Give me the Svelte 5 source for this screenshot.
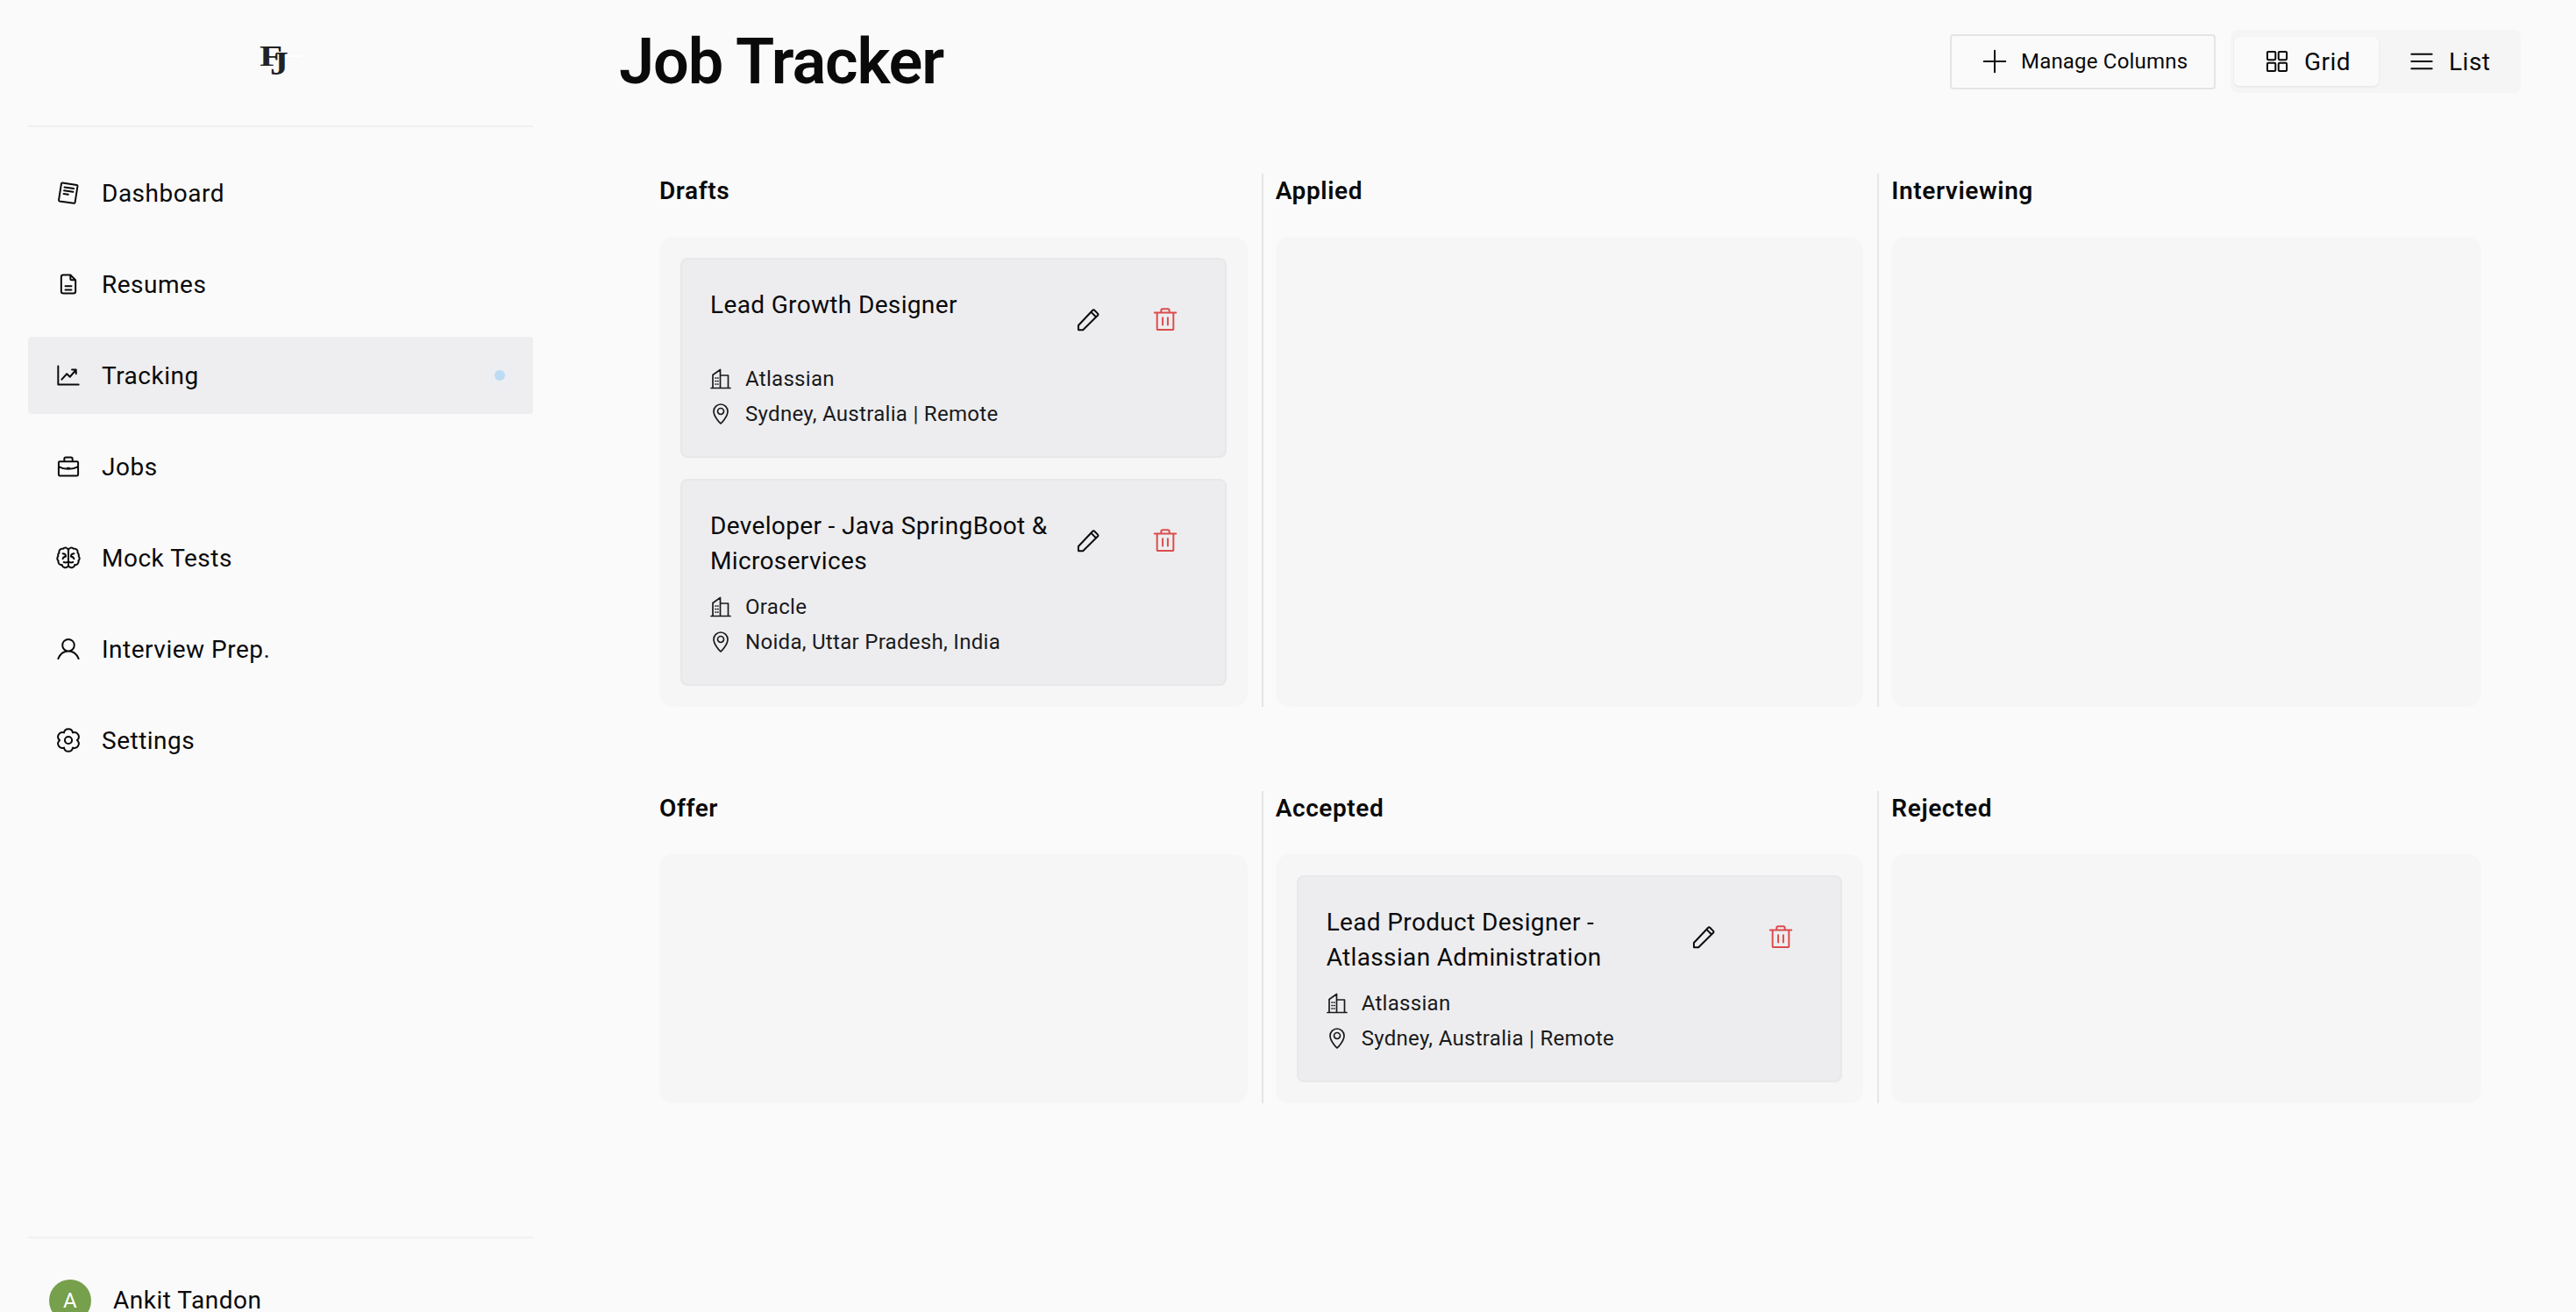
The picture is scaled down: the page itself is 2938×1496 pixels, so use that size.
<script>
  const icons = {
    file: "M14 3v4a1 1 0 0 0 1 1h4M17 21H7a2 2 0 0 1-2-2V5a2 2 0 0 1 2-2h7l5 5v11a2 2 0 0 1-2 2zM9 14h6M9 17.5h6",
    note: "M6.2 2.2l14 2a1 1 0 0 1 .8 1.1l-2.500 16a1 1 0 0 1-1.100.8l-14-2a1 1 0 0 1-.8-1.100L5.100 3a1 1 0 0 1 1.100-.8zM8.200 6.500l9 1.300M7.800 9.700l8.800 1.300M7.400 12.900l4.400.6",
    chart: "M2 3v18h20M5.5 16l5-5.5 3 3 6-7M15.5 6.5h4v4",
    briefcase: "M2.5 8a1 1 0 0 1 1-1h17a1 1 0 0 1 1 1v12a1 1 0 0 1-1 1h-17a1 1 0 0 1-1-1zM8 7V4.5a1.5 1.5 0 0 1 1.5-1.5h5A1.5 1.5 0 0 1 16 4.5V7M2.5 12c3 1.6 6 2.3 9.5 2.3s6.500-.7 9.500-2.300M11 13.500h2",
    brain: "M12 4.500a3 3 0 0 0-5.200-1.300a3.200 3.200 0 0 0-3.800 3.900a3.300 3.300 0 0 0-1 3.400a3.400 3.400 0 0 0 .2 4.500a3.100 3.100 0 0 0 3.500 3.800a3.400 3.400 0 0 0 6.300 1.200V4.500zM12 4.500a3 3 0 0 1 5.200-1.300a3.200 3.200 0 0 1 3.800 3.900a3.300 3.300 0 0 1 1 3.400a3.400 3.400 0 0 1-.2 4.500a3.100 3.100 0 0 1-3.500 3.800a3.400 3.400 0 0 1-6.300 1.200M6.500 8c1.800 0 2.900 1 3 2.700c-1.500.2-2.600 1-3 2.300M12 15.500c-1.200 1.200-2.900 1.400-4.500.8M17.500 8c-1.800 0-2.900 1-3 2.700c1.500.2 2.600 1 3 2.300M12 15.500c1.200 1.200 2.900 1.400 4.500.8",
    user: "M12 2.500a5.800 5.800 0 1 0 0 11.600a5.800 5.800 0 0 0 0-11.600zM2 21.500c1.800-4.600 5.500-7.400 10-7.400s8.200 2.800 10 7.400",
    gear: "M7.750 4.640A4.300 4.300 0 0 1 16.250 4.640A4.300 4.300 0 0 1 20.500 12A4.300 4.300 0 0 1 16.250 19.360A4.300 4.300 0 0 1 7.750 19.360A4.300 4.300 0 0 1 3.500 12A4.300 4.300 0 0 1 7.750 4.640zM12 8.500a3.500 3.500 0 1 0 0 7a3.500 3.500 0 0 0 0-7z",
    plus: "M12 1.500v21M1.500 12h21",
    grid: "M3.500 2.500h6a1 1 0 0 1 1 1v6a1 1 0 0 1-1 1h-6a1 1 0 0 1-1-1v-6a1 1 0 0 1 1-1zM14.500 2.500h6a1 1 0 0 1 1 1v6a1 1 0 0 1-1 1h-6a1 1 0 0 1-1-1v-6a1 1 0 0 1 1-1zM3.500 13.500h6a1 1 0 0 1 1 1v6a1 1 0 0 1-1 1h-6a1 1 0 0 1-1-1v-6a1 1 0 0 1 1-1zM14.500 13.500h6a1 1 0 0 1 1 1v6a1 1 0 0 1-1 1h-6a1 1 0 0 1-1-1v-6a1 1 0 0 1 1-1z",
    list: "M2 5h20M2 12h20M2 19h20",
    building: "M1 22.500h22M3 22.500V7.500L11.500 1.500v21M11.500 8H20.500v14.500M6 11h.5M8.500 11h.5M6 14.500h.5M8.500 14.500h.5M6 18h.5M8.500 18h.5",
    pin: "M12 23s-8-7.500-8-14a8 8 0 0 1 16 0c0 6.500-8 14-8 14zM12 5.500a3.500 3.500 0 1 0 0 7a3.500 3.500 0 0 0 0-7z",
    pencil: "M2.500 22v-4L16.500 3.200a1.200 1.200 0 0 1 1.700 0l3.300 3.300a1.200 1.200 0 0 1 0 1.700L7 22.500H3a.5.5 0 0 1-.5-.5zM15 5l4.800 4.800",
    trash: "M1.500 5.500h21M8 5.500V3.500A1.500 1.500 0 0 1 9.500 2h5A1.500 1.500 0 0 1 16 3.500v2M4 5.500v16a.8.8 0 0 0 .8.8h14.400a.8.8 0 0 0 .8-.8v-16M9.500 10.500v7M14.500 10.500v7"
  };

  const navItems = [
    { label: "Dashboard", icon: "note" },
    { label: "Resumes", icon: "file" },
    { label: "Tracking", icon: "chart", active: true },
    { label: "Jobs", icon: "briefcase" },
    { label: "Mock Tests", icon: "brain" },
    { label: "Interview Prep.", icon: "user" },
    { label: "Settings", icon: "gear" }
  ];

  const columns = [
    {
      name: "Drafts",
      jobs: [
        { title: "Lead Growth Designer", company: "Atlassian", place: "Sydney, Australia | Remote" },
        { title: "Developer - Java SpringBoot & Microservices", company: "Oracle", place: "Noida, Uttar Pradesh, India" }
      ]
    },
    { name: "Applied", jobs: [] },
    { name: "Interviewing", jobs: [] },
    { name: "Offer", jobs: [] },
    {
      name: "Accepted",
      jobs: [
        { title: "Lead Product Designer - Atlassian Administration", company: "Atlassian", place: "Sydney, Australia | Remote" }
      ]
    },
    { name: "Rejected", jobs: [] }
  ];
</script>

{#snippet icon(name, size = 28)}
  <svg class="icon" width={size} height={size} viewBox="0 0 24 24" fill="none" stroke="currentColor" stroke-linecap="round" stroke-linejoin="round">
    <path d={icons[name]} />
  </svg>
{/snippet}

<div class="app">
  <aside class="sidebar">
    <div class="logo">
      <span class="logo-mark"><span class="f">F</span><span class="j">J</span><i></i></span>
    </div>

    <nav class="nav">
      {#each navItems as item}
        <a class="nav-item" class:active={item.active} href="#top">
          {@render icon(item.icon)}
          <span>{item.label}</span>
          {#if item.active}<b class="dot"></b>{/if}
        </a>
      {/each}
    </nav>

    <div class="profile">
      <div class="avatar">A</div>
      <span>Ankit Tandon</span>
    </div>
  </aside>

  <main class="main">
    <header class="header">
      <h1>Job Tracker</h1>
      <div class="tools">
        <button class="manage">{@render icon("plus")}Manage Columns</button>
        <div class="toggle">
          <button class="selected">{@render icon("grid")}Grid</button>
          <button>{@render icon("list")}List</button>
        </div>
      </div>
    </header>

    <section class="board">
      {#each columns as col}
        <div class="cell">
          <h2>{col.name}</h2>
          <div class="panel">
            {#each col.jobs as job}
              <article class="card">
                <div class="card-top">
                  <h3>{job.title}</h3>
                  <button class="action">{@render icon("pencil")}</button>
                  <button class="action danger">{@render icon("trash")}</button>
                </div>
                <div class="meta">{@render icon("building", 24)}{job.company}</div>
                <div class="meta">{@render icon("pin", 24)}{job.place}</div>
              </article>
            {/each}
          </div>
        </div>
      {/each}
    </section>
  </main>
</div>

<style>
  :global(body) {
    margin: 0;
    background: #fafafa;
  }

  .app {
    display: flex;
    height: 100vh;
    overflow: hidden;
    color: #0a0a0b;
    font-family: Roboto, "Noto Sans", sans-serif;
  }

  .icon {
    flex: none;
    stroke-width: 1.7;
  }

  .sidebar {
    flex: none;
    box-sizing: border-box;
    width: 640px;
    height: calc(100vh + 35px);
    padding: 0 32px;
    display: flex;
    flex-direction: column;
  }

  .logo {
    flex: none;
    height: 143px;
    border-bottom: 2px solid #f0f0f0;
    display: flex;
    justify-content: center;
  }

  .logo-mark {
    position: relative;
    width: 48px;
    height: 100%;
    margin-left: 8px;
    font-family: "Liberation Serif", serif;
    font-weight: 700;
    line-height: 1;
    color: #222;
  }

  .f, .j, .logo-mark i {
    position: absolute;
  }

  .f {
    left: -4px;
    top: 48px;
    font-size: 33px;
    transform: scaleX(1.3);
    transform-origin: left;
  }

  .j {
    left: 8px;
    top: 53px;
    font-size: 38px;
    transform: scaleX(1.1);
    transform-origin: left;
  }

  .logo-mark i {
    left: 25px;
    top: 63px;
    width: 19px;
    height: 2px;
    background: #fff;
  }

  .nav {
    flex: 1;
    margin-top: 31px;
    display: flex;
    flex-direction: column;
    gap: 16px;
  }

  .nav-item {
    position: relative;
    height: 88px;
    padding-left: 32px;
    display: flex;
    align-items: center;
    gap: 24px;
    border-radius: 4px;
    color: inherit;
    text-decoration: none;
    font-size: 28px;
    font-weight: 450;
    letter-spacing: 0.5px;
  }

  .nav-item.active {
    background: #eeeef0;
  }

  .dot {
    position: absolute;
    right: 32px;
    width: 12px;
    height: 12px;
    border-radius: 50%;
    background: #bcdcf3;
    box-shadow: 0 0 0 8px #eceef1;
  }

  .profile {
    flex: none;
    height: 121px;
    border-top: 2px solid #f0f0f0;
    padding: 47px 0 0 24px;
    box-sizing: border-box;
    display: flex;
    align-items: flex-start;
    gap: 25px;
    font-size: 28px;
    font-weight: 450;
    letter-spacing: 0.5px;
  }

  .avatar {
    width: 48px;
    height: 48px;
    border-radius: 50%;
    background: #76a04b;
    color: #fff;
    font-size: 24px;
    font-weight: 400;
    display: flex;
    align-items: center;
    justify-content: center;
  }

  .profile span {
    line-height: 48px;
  }

  .main {
    flex: 1;
    min-width: 0;
  }

  .header {
    height: 140px;
    padding: 0 63px 0 66px;
    display: flex;
    align-items: center;
    justify-content: space-between;
  }

  h1 {
    margin: 0;
    font-size: 72px;
    font-weight: 600;
    letter-spacing: -1.1px;
  }

  .tools {
    display: flex;
    align-items: center;
    gap: 17px;
  }

  button {
    font: inherit;
    color: inherit;
    background: none;
    border: 0;
    padding: 0;
    display: flex;
    align-items: center;
  }

  .manage {
    box-sizing: border-box;
    width: 303px;
    height: 63px;
    padding-left: 35px;
    gap: 16px;
    border: 2px solid #e5e5e5;
    border-radius: 4px;
    font-size: 24px;
    font-weight: 450;
    letter-spacing: 0.2px;
  }

  .toggle {
    box-sizing: border-box;
    width: 331px;
    height: 72px;
    padding: 8px 4px;
    display: flex;
    background: #f5f5f5;
    border-radius: 8px;
  }

  .toggle button {
    flex: none;
    height: 56px;
    width: 165px;
    padding-left: 35px;
    box-sizing: border-box;
    gap: 17px;
    border-radius: 6px;
    font-size: 28px;
    font-weight: 450;
    letter-spacing: 0.5px;
  }

  .toggle .selected {
    background: #fafafa;
    box-shadow: 0 1px 3px rgba(0, 0, 0, 0.08);
  }

  .board {
    margin: 58px 92px 0 98px;
    display: grid;
    grid-template-columns: repeat(3, 1fr);
    row-gap: 96px;
  }

  .cell {
    padding: 0 16px 0 14px;
    border-right: 2px solid #e5e5e5;
    display: flex;
    flex-direction: column;
  }

  .cell:nth-child(3n) {
    border-right: 0;
  }

  h2 {
    margin: 0 0 32px;
    font-size: 28px;
    line-height: 40px;
    font-weight: 600;
    letter-spacing: 0.6px;
  }

  .panel {
    flex: 1;
    padding: 24px;
    border-radius: 16px;
    background: #f6f6f6;
    display: flex;
    flex-direction: column;
    gap: 24px;
  }

  .card {
    padding: 32px 32px 28px;
    border: 2px solid #e8e8ea;
    border-radius: 8px;
    background: #ededef;
  }

  .card-top {
    display: flex;
    margin-bottom: 12px;
  }

  h3 {
    flex: 1;
    margin: 0;
    font-size: 28px;
    line-height: 40px;
    font-weight: 450;
    letter-spacing: 0.35px;
  }

  .action {
    flex: none;
    width: 72px;
    height: 72px;
    justify-content: center;
  }

  .action + .action {
    margin-left: 16px;
  }

  .danger {
    color: #dc4c4c;
  }

  .meta {
    display: flex;
    align-items: center;
    gap: 16px;
    height: 40px;
    font-size: 24px;
    letter-spacing: 0.3px;
    color: #1a1a1c;
  }
</style>
